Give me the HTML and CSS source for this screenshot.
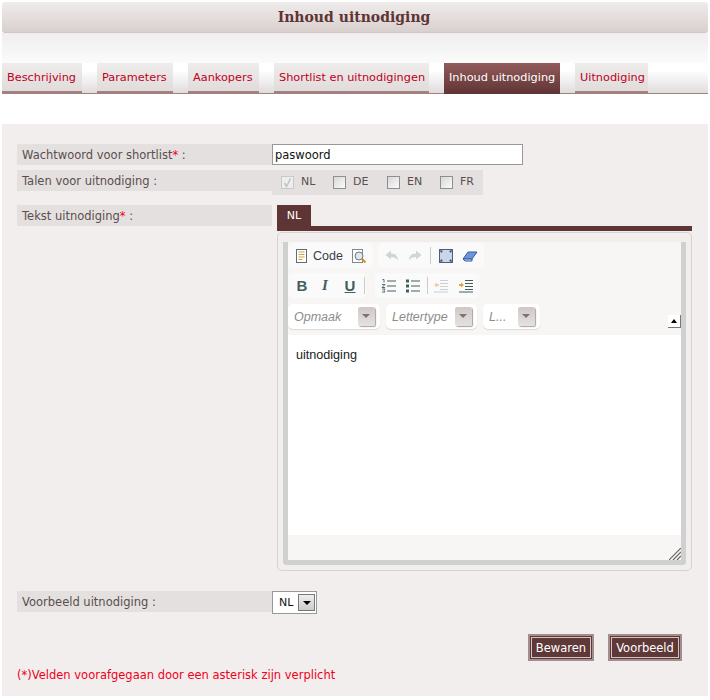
FILE: index.html
```html
<!DOCTYPE html>
<html lang="nl">
<head>
    <meta charset="UTF-8">
    <meta name="viewport" content="width=device-width, initial-scale=1.0">
    <title>Inhoud uitnodiging</title>
    <link rel="stylesheet" href="styles.css">
</head>
<body>

    <h1 class="title">Inhoud uitnodiging</h1>
    <div class="title-fade"></div>

    <ul class="tabs">
        <li class="tab tab-1">Beschrijving</li>
        <li class="tab tab-2">Parameters</li>
        <li class="tab tab-3">Aankopers</li>
        <li class="tab tab-4">Shortlist en uitnodigingen</li>
        <li class="tab tab-5 active">Inhoud uitnodiging</li>
        <li class="tab tab-6">Uitnodiging</li>
    </ul>

    <form class="panel">
        <div class="row row-pass">
            <div class="label">Wachtwoord voor shortlist<span class="req">*</span> :</div>
            <input class="text-input" type="text" value="paswoord">
        </div>

        <div class="row row-lang">
            <div class="label">Talen voor uitnodiging :</div>
            <div class="langs">
                <label class="lang lang-nl"><span class="check checked"><svg width="13" height="13" viewBox="0 0 13 13"><path d="M3.5 7 L5.5 10.5 L9.5 2.5" fill="none" stroke="#c4c4c4" stroke-width="1.6"/></svg></span>NL</label>
                <label class="lang lang-de"><span class="check"></span>DE</label>
                <label class="lang lang-en"><span class="check"></span>EN</label>
                <label class="lang"><span class="check"></span>FR</label>
            </div>
        </div>

        <div class="row row-text">
            <div class="label">Tekst uitnodiging<span class="req">*</span> :</div>
            <div class="editor-col">
                <div class="lang-tab">NL</div>
                <div class="lang-bar"></div>
                <div class="editor-box">
                    <div class="editor">
                        <div class="toolbar">
                            <div class="tool-row tool-row-1">
                                <div class="group group-a">
                                    <svg class="ico" width="16" height="16" viewBox="0 0 16 16"><rect x="2.500" y="1.500" width="10" height="13" fill="#fff" stroke="#5f6f6f"/><path d="M4.500 4h6M4.500 6.500h6M4.500 9h6M4.500 11.500h4" stroke="#d0a040"/></svg>
                                    <span class="code-label">Code</span>
                                    <svg class="ico ico-prev" width="16" height="16" viewBox="0 0 16 16"><rect x="1.500" y="1.500" width="10" height="13" fill="#fff" stroke="#7f8a8a"/><circle cx="8" cy="8" r="4" fill="#dfe6ee" stroke="#6f7a80"/><path d="M11 11l3.500 3.500" stroke="#d58a2a" stroke-width="2"/></svg>
                                </div>
                                <div class="group group-b">
                                    <svg class="ico" width="16" height="16" viewBox="0 0 16 16"><path d="M1.500 7L7 2.500V5.500c4 0 7 2 7 7-1.500-2.500-4-3.500-7-3.500v2.500z" fill="#cfd6d6"/></svg>
                                    <svg class="ico ico-redo" width="16" height="16" viewBox="0 0 16 16"><path d="M14.500 7L9 2.500V5.500c-4 0-7 2-7 7 1.500-2.500 4-3.500 7-3.500v2.500z" fill="#cfd6d6"/></svg>
                                    <span class="sep"></span>
                                    <svg class="ico" width="16" height="16" viewBox="0 0 16 16"><rect x="1.500" y="1.500" width="13" height="13" fill="#c9d6ea" stroke="#4d5f70"/><path d="M2 2l3 1-2 2zM14 2l-1 3-2-2zM2 14l1-3 2 2zM14 14l-3-1 2-2z" fill="#2b4a80"/></svg>
                                    <svg class="ico ico-erase" width="16" height="16" viewBox="0 0 16 16"><path d="M1 11l5-7h9l-5 7z" fill="#6f94d8" stroke="#3a5aa8"/><path d="M1 11l2 2h7l0-2z" fill="#c9d6f0" stroke="#3a5aa8"/></svg>
                                </div>
                            </div>
                            <div class="tool-row tool-row-2">
                                <div class="group group-c">
                                    <b class="fmt fmt-b">B</b>
                                    <i class="fmt fmt-i">I</i>
                                    <u class="fmt fmt-u">U</u>
                                    <span class="sep sep-c"></span>
                                </div>
                                <div class="group group-d">
                                    <svg class="ico" width="16" height="16" viewBox="0 0 16 16"><path d="M6 3h9M6 8h9M6 13h9" stroke="#40605f" stroke-width="1.200"/><path d="M1.500 1.500h1.500v3M1 6.500h3l-3 3h3M1 11h3l-1 1.500 1 1.500H1" fill="none" stroke="#40605f" stroke-width=".9"/></svg>
                                    <svg class="ico ico-ul" width="16" height="16" viewBox="0 0 16 16"><path d="M6 3h9M6 8h9M6 13h9" stroke="#40605f" stroke-width="1.200"/><path d="M1 1.500h3v3H1zM1 6.500h3v3H1zM1 11.500h3v3H1z" fill="#40605f"/></svg>
                                    <span class="sep"></span>
                                    <svg class="ico" width="16" height="16" viewBox="0 0 16 16"><path d="M7 2.500h8M7 5.500h8M7 8.500h8M7 11.500h8M1 14h14" stroke="#c8d0d0"/><path d="M1 7l3-2.500v1.500h2v2H4v1.500z" fill="#f6cf9c"/></svg>
                                    <svg class="ico ico-in" width="16" height="16" viewBox="0 0 16 16"><path d="M7 2.500h8M7 5.500h8M7 8.500h8M7 11.500h8M1 14h14" stroke="#40605f"/><path d="M6 7L3 4.500V6H1v2h2v1.500z" fill="#eea040"/></svg>
                                </div>
                            </div>
                            <div class="tool-row tool-row-3">
                                <div class="combo combo-1"><span class="combo-text">Opmaak</span><span class="combo-btn"></span></div>
                                <div class="combo combo-2"><span class="combo-text">Lettertype</span><span class="combo-btn"></span></div>
                                <div class="combo combo-3"><span class="combo-text">L...</span><span class="combo-btn"></span></div>
                            </div>
                            <span class="collapse"></span>
                        </div>
                        <div class="content">uitnodiging</div>
                        <div class="editor-foot">
                            <svg class="grip" width="12" height="12" viewBox="0 0 12 12"><path d="M0 12L12 0M4 12L12 4M8 12L12 8" stroke="#666" stroke-width="1.200"/></svg>
                        </div>
                    </div>
                </div>
            </div>
        </div>

        <div class="row row-preview">
            <div class="label">Voorbeeld uitnodiging :</div>
            <div class="select-box"><span class="select-val">NL</span><span class="select-btn"></span></div>
        </div>

        <div class="buttons">
            <button class="btn btn-save" type="button">Bewaren</button>
            <button class="btn btn-preview" type="button">Voorbeeld</button>
        </div>

        <p class="note">(*)Velden voorafgegaan door een asterisk zijn verplicht</p>
    </form>

</body>
</html>
```

FILE: styles.css
```css
html, body {
    margin: 0;
    padding: 0;
    background-color: #fff;
}
body {
    font-family: "DejaVu Sans", Verdana, sans-serif;
    font-size: 11.5px;
    color: #5a4e4e;
    padding: 2px 2px 0;
}
.title {
    margin: 0;
    height: 31px;
    line-height: 31px;
    box-sizing: border-box;
    padding-right: 2px;
    text-align: center;
    font-family: "DejaVu Serif", serif;
    font-size: 14px;
    font-weight: bold;
    color: #5f3434;
    background: linear-gradient(#efecec, #d9d0ce);
    border-bottom: 1px solid #d3c5c3;
    border-radius: 3px;
}
.title-fade {
    height: 30px;
    background: linear-gradient(#f0eeee, #fbfbfb);
}

/* tabs */
.tabs {
    display: flex;
    margin: 0;
    padding: 0;
    list-style: none;
    height: 31px;
    box-sizing: border-box;
    border-bottom: 1px solid #a67f7f;
    background: linear-gradient(#fff 25%, #e0dcdc);
}
.tab {
    box-sizing: border-box;
    height: 30px;
    line-height: 30px;
    padding-left: 5px;
    margin-right: 15px;
    font-size: 11.3px;
    color: #c00020;
    background: linear-gradient(#efecec, #e0dcdc);
    border-bottom: 2px solid #a67f7f;
}
.tab-1 { width: 80px; }
.tab-2 { width: 76px; }
.tab-3 { width: 71px; }
.tab-4 { width: 155px; }
.tab-5 { width: 116px; }
.tab-6 { width: 73px; margin-right: 0; }
.tab.active {
    height: 31px;
    color: #fff;
    background: linear-gradient(#935b5b, #5f3434);
    border-bottom: 0;
}

/* main panel */
.panel {
    margin-top: 30px;
    padding: 20px 0 0 15px;
    height: 572px;
    box-sizing: border-box;
    background-color: #f2eeed;
}
.row {
    display: flex;
    align-items: flex-start;
}
.row-pass { margin-bottom: 5px; }
.row-lang { margin-bottom: 10px; }
.row-text { margin-bottom: 20px; }
.label {
    box-sizing: border-box;
    width: 255px;
    height: 21px;
    line-height: 22px;
    padding-left: 5px;
    background-color: #e4e0df;
}
.req {
    color: #f00020;
}
.text-input {
    box-sizing: border-box;
    width: 251px;
    height: 21px;
    margin: 0;
    padding: 1px 2px 0;
    border: 1px solid #999;
    background: #fff;
    font-family: "DejaVu Sans", Verdana, sans-serif;
    font-size: 11.5px;
    color: #111;
    outline: 0;
}
.langs {
    display: flex;
    width: 211px;
    height: 25px;
    box-sizing: border-box;
    padding: 6px 0 0 9px;
    background-color: #e4e0df;
    font-size: 11px;
}
.lang {
    display: flex;
    align-items: flex-start;
    line-height: 12px;
}
.lang-nl { width: 52px; }
.lang-de { width: 54px; }
.lang-en { width: 53px; }
.check {
    box-sizing: border-box;
    width: 13px;
    height: 13px;
    margin-right: 7px;
    border: 1px solid #8f8f8f;
    background: linear-gradient(135deg, #d8d8d8, #fbfbfb);
    overflow: hidden;
}
.check svg {
    display: block;
    margin: -1px;
}
.check.checked {
    border-color: #c8c8c8;
    background: #eeeeee;
}

/* editor */
.editor-col {
    margin-left: 5px;
    width: 415px;
}
.lang-tab {
    width: 34px;
    height: 21px;
    line-height: 22px;
    font-size: 11px;
    text-align: center;
    color: #fff;
    background-color: #5f3434;
}
.lang-bar {
    height: 5px;
    margin-bottom: 1px;
    background-color: #5f3434;
}
.editor-box {
    box-sizing: border-box;
    height: 339px;
    padding: 9px 5px 5px;
    border: 1px solid #d5d2d0;
    border-radius: 5px;
}
.editor {
    height: 100%;
    box-sizing: border-box;
    border: 5px solid #d0d0d0;
    border-top: 0;
    border-radius: 0 0 4px 4px;
    background-color: #f7f6f4;
}
.toolbar {
    position: relative;
    height: 93px;
    box-sizing: border-box;
    padding-top: 1px;
}
.tool-row {
    display: flex;
    gap: 5px;
    height: 25px;
}
.tool-row-2 { margin-top: 5px; gap: 9px; }
.tool-row-3 { margin-top: 6px; height: 25px; gap: 6px; }
.group {
    display: flex;
    align-items: center;
    box-sizing: border-box;
    height: 25px;
    padding-left: 5px;
    background-color: #fbfafa;
    border-radius: 5px;
}
.group-a { width: 85px; padding-left: 6px; }
.group-b { width: 106px; padding-left: 6px; }
.group-c { width: 78px; padding-left: 6px; }
.group-d { width: 105px; padding-left: 6px; }
.ico {
    display: block;
    flex: none;
}
.code-label {
    margin-left: 3px;
    font-family: "Liberation Sans", Arial, sans-serif;
    font-size: 12.500px;
    color: #3a3a4a;
}
.ico-prev { margin-left: 8px; }
.ico-redo { margin-left: 7px; }
.ico-erase { margin-left: 8px; }
.ico-ul { margin-left: 8px; }
.ico-in { margin-left: 9px; }
.sep {
    flex: none;
    width: 1px;
    height: 17px;
    margin: 0 5px 0 6px;
    background-color: #ccc;
}
.group-b .sep { margin: 0 7px 0 7px; }
.sep-c { margin: 0 1px 0 6px; }
.fmt {
    flex: none;
    width: 16px;
    margin-right: 7px;
    text-align: center;
    font-family: "Liberation Sans", Arial, sans-serif;
    font-size: 15px;
    font-weight: bold;
    line-height: 17px;
    color: #40605f;
}
.fmt-i { font-family: "Liberation Serif", serif; margin-right: 9px; }
.fmt-u { margin-right: 0; }
.combo {
    display: flex;
    align-items: center;
    justify-content: space-between;
    box-sizing: border-box;
    height: 25px;
    padding: 0 5px 0 6px;
    background-color: #fff;
    border-radius: 5px;
    box-shadow: 0 1px 1px #dcdad8;
}
.combo-1 { width: 92px; }
.combo-2 { width: 91px; }
.combo-3 { width: 57px; }
.combo-text {
    font-family: "Liberation Sans", Arial, sans-serif;
    font-size: 12.500px;
    font-style: italic;
    color: #8c8c8c;
}
.combo-btn {
    position: relative;
    width: 17px;
    height: 19px;
    background: linear-gradient(#d0c8c6, #e6e1e0);
    border-radius: 2px;
    box-shadow: 1px 1px 1px #a9a4a2;
}
.combo-btn::after {
    content: "";
    position: absolute;
    left: 4px;
    top: 7px;
    border: 4px solid transparent;
    border-top: 4px solid #777;
}
.collapse {
    position: absolute;
    right: 0;
    top: 73px;
    box-sizing: border-box;
    width: 13px;
    height: 13px;
    background-color: #fff;
    border-right: 1px solid #777;
    border-bottom: 1px solid #777;
}
.collapse::after {
    content: "";
    position: absolute;
    left: 3px;
    top: 1px;
    border: 3px solid transparent;
    border-bottom: 4px solid #000;
}
.content {
    box-sizing: border-box;
    height: 200px;
    padding: 13px 8px;
    background-color: #fff;
    font-family: "Liberation Sans", Arial, sans-serif;
    font-size: 12.600px;
    color: #222;
}
.editor-foot {
    display: flex;
    justify-content: flex-end;
    align-items: flex-end;
    height: 25px;
}
.grip {
    display: block;
}

/* onderaan */
.select-box {
    display: flex;
    align-items: center;
    box-sizing: border-box;
    width: 45px;
    height: 23px;
    padding-left: 6px;
    border: 1px solid #999;
    background-color: #fff;
    color: #111;
    font-size: 11px;
}
.select-val {
    width: 19px;
}
.select-btn {
    position: relative;
    box-sizing: border-box;
    width: 17px;
    height: 17px;
    border: 1px solid #777;
    background: linear-gradient(#eee, #ccc);
}
.select-btn::after {
    content: "";
    position: absolute;
    left: 4px;
    top: 6px;
    border: 4px solid transparent;
    border-top: 4px solid #000;
}
.buttons {
    display: flex;
    justify-content: flex-end;
    gap: 14px;
    margin-top: 20px;
    padding-right: 26px;
}
.btn {
    box-sizing: border-box;
    height: 27px;
    padding: 0;
    margin: 0;
    border: 2px solid #a48e8c;
    outline: 1px solid #d0c4c4;
    outline-offset: -4px;
    background-color: #5f3838;
    color: #fff;
    font-family: "DejaVu Sans", Verdana, sans-serif;
    font-size: 11.5px;
}
.btn-save { width: 66px; }
.btn-preview { width: 74px; }
.note {
    margin: 6px 0 0;
    line-height: 16px;
    color: #f00020;
}
```
